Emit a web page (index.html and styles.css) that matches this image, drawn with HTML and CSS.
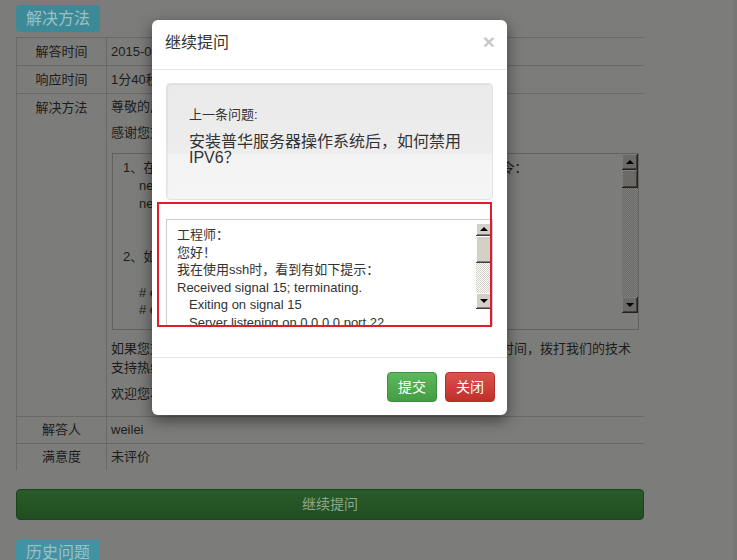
FILE: index.html
```html
<!DOCTYPE html>
<html lang="zh-CN">
<head>
<meta charset="utf-8">
<title>继续提问</title>
<link rel="stylesheet" href="styles.css">
</head>
<body>
<div class="page">
  <div class="badge">解决方法</div>
  <table class="info">
    <tr class="r-short">
      <td class="k">解答时间</td>
      <td class="v">2015-09-23 10:25:18</td>
    </tr>
    <tr class="r-short">
      <td class="k">响应时间</td>
      <td class="v">1分40秒</td>
    </tr>
    <tr>
      <td class="k">解决方法</td>
      <td class="v v-long">
        <p class="ln ln-first">尊敬的用户，您好！</p>
        <p class="ln ln-second">感谢您对普华的支持！</p>
        <div class="bta">
          <div class="bta-text"><div>1、在/etc/sysctl.conf配置文件中添加如下内容，保存后再执行该命令：</div><div class="ind">net.ipv6.conf.all.disable_ipv6 = 1</div><div class="ind">net.ipv6.conf.default.disable_ipv6 = 1</div><div>&nbsp;</div><div>&nbsp;</div><div>2、如果需要临时禁用IPV6，可执行以下命令：</div><div>&nbsp;</div><div class="ind"># echo 1 &gt; /proc/sys/net/ipv6/conf/all/disable_ipv6</div><div class="ind"># echo 1 &gt; /proc/sys/net/ipv6/conf/default/disable_ipv6</div></div>
          <div class="bsb">
            <div class="bsb-btn bsb-up"></div>
            <div class="bsb-thumb"></div>
            <div class="bsb-track"></div>
            <div class="bsb-btn bsb-down"></div>
            <div class="bsb-grip"></div>
          </div>
        </div>
        <p class="ln-para">如果您对以上解决方法有疑问，或在使用中遇到其他问题，请在工作时间，拨打我们的技术支持热线：400-089-1870。</p>
        <p class="ln ln-last">欢迎您再次使用普华技术支持服务！</p>
      </td>
    </tr>
    <tr class="r-foot">
      <td class="k">解答人</td>
      <td class="v">weilei</td>
    </tr>
    <tr class="r-foot">
      <td class="k">满意度</td>
      <td class="v">未评价</td>
    </tr>
  </table>
  <div class="btn-continue">继续提问</div>
  <div class="badge badge-history">历史问题</div>
</div>

<div class="modal">
  <div class="modal-header">
    <span class="modal-title">继续提问</span>
    <span class="modal-close">×</span>
  </div>
  <div class="modal-body">
    <div class="well">
      <div class="well-label">上一条问题:</div>
      <div class="well-q">安装普华服务器操作系统后，如何禁用IPV6？</div>
    </div>
    <div class="ta">
      <div class="ta-text"><div>工程师：</div><div>您好！</div><div>我在使用ssh时，看到有如下提示：</div><div>Received signal 15; terminating.</div><div class="ind2">Exiting on signal 15</div><div class="ind2">Server listening on 0.0.0.0 port 22.</div></div>
      <div class="sb">
        <div class="sb-btn sb-up"></div>
        <div class="sb-thumb"></div>
        <div class="sb-track"></div>
        <div class="sb-btn sb-down"></div>
        <div class="sb-grip"></div>
      </div>
    </div>
    <div class="mark"></div>
  </div>
  <div class="modal-footer">
    <span class="btn btn-ok">提交</span>
    <span class="btn btn-close">关闭</span>
  </div>
</div>
</body>
</html>
```

FILE: styles.css
```css
html, body {
  margin: 0;
  padding: 0;
}
body {
  width: 737px;
  height: 560px;
  overflow: hidden;
  background: #7c7d7a;
  box-shadow: inset -3px 0 0 #767774, inset -5px 0 0 #7a7b78;
  font-family: "Liberation Sans", "Noto Sans CJK SC", sans-serif;
  font-size: 13px;
  color: #1c1c1c;
  position: relative;
}

/* ---------- background page (dimmed) ---------- */
.page {
  padding: 5px 0 0 16px;
  width: 628px;
}
.badge {
  width: 84px;
  height: 27px;
  border-radius: 4px;
  background: #3c8a98;
  color: #9dc0c5;
  font-size: 16px;
  line-height: 27px;
  text-align: center;
}
.badge-history {
  margin-top: 19px;
  background: #4192a2;
}
.info {
  border-collapse: collapse;
  width: 628px;
  margin-top: 5px;
  table-layout: fixed;
}
.info td {
  border-top: 1px solid #696a67;
  padding: 0;
  vertical-align: top;
}
.info td.k {
  width: 89px;
  border-left: 1px solid #696a67;
  border-right: 1px solid #696a67;
  text-align: center;
  line-height: 27px;
}
.info td.v {
  padding-left: 4px;
  line-height: 27px;
}
.info .r-foot td {
  line-height: 26px;
}
.info td.v-long {
  line-height: 20px;
  padding: 3px 8px 12px 4px;
}
.ln {
  margin: 0;
  line-height: 20px;
  white-space: nowrap;
}
.ln-second {
  margin-top: 6px;
}
.ln-last {
  margin-top: 7px;
}
.ln-para {
  margin: 9px 0 0;
  line-height: 19px;
}
.bta {
  margin: 10px 0 0 1px;
  width: 527px;
  height: 177px;
  box-sizing: border-box;
  border: 1px solid #62635f;
  display: flex;
}
.bta-text {
  flex: 1;
  overflow: hidden;
  padding: 5px 0 0 10px;
  line-height: 17.8px;
  white-space: nowrap;
}
.ind {
  padding-left: 16px;
}
.bsb {
  width: 16px;
  display: flex;
  flex-direction: column;
}
.bsb-btn, .bsb-thumb {
  background: #6b6a66;
  box-shadow: inset -1px -1px #222, inset 1px 1px #7d7d7b, inset -2px -2px #404040;
  position: relative;
}
.bsb-up, .bsb-down {
  height: 16px;
}
.bsb-thumb {
  height: 18px;
}
.bsb-track {
  flex: 1;
  background: repeating-conic-gradient(#6a6865 0 25%, #7f7f7d 0 50%) 0 0 / 2px 2px;
}
.bsb-grip {
  height: 16px;
}
.bsb-up::after, .bsb-down::after {
  content: "";
  position: absolute;
  left: 4px;
  top: 6px;
  border-left: 4px solid transparent;
  border-right: 4px solid transparent;
}
.bsb-up::after {
  border-bottom: 4px solid #000;
}
.bsb-down::after {
  border-top: 4px solid #000;
}
.btn-continue {
  margin-top: 19px;
  height: 31px;
  box-sizing: border-box;
  border: 1px solid #1c441c;
  border-radius: 4px;
  background: linear-gradient(#2a5c2a, #204d20);
  color: #8fa78f;
  font-size: 14px;
  line-height: 29px;
  text-align: center;
}

/* ---------- modal ---------- */
.modal {
  position: absolute;
  left: 152px;
  top: 20px;
  width: 355px;
  background: #fff;
  border-radius: 6px;
  box-shadow: 0 5px 15px rgba(0, 0, 0, 0.5);
  color: #333;
}
.modal-header {
  height: 50px;
  box-sizing: border-box;
  padding: 13px 12px 0 13px;
  border-bottom: 1px solid #e5e5e5;
  display: flex;
  justify-content: space-between;
  align-items: flex-start;
}
.modal-title {
  font-size: 16px;
  line-height: 20px;
  color: #333;
}
.modal-close {
  font-size: 21px;
  font-weight: bold;
  line-height: 18px;
  color: #c8c8c8;
}
.modal-body {
  position: relative;
  padding: 13px 14px 31px;
}
.well {
  height: 117px;
  box-sizing: border-box;
  border: 1px solid #e3e3e3;
  border-radius: 4px;
  background: linear-gradient(#ebeaeb 0, #eeedee 60%, #f4f3f4 61%, #f5f5f5 100%);
  box-shadow: inset 1px 1px 1px rgba(0, 0, 0, 0.05);
  padding: 22px 22px 0;
}
.well-label {
  font-size: 13px;
  line-height: 18px;
}
.well-q {
  margin-top: 10px;
  font-size: 16px;
  line-height: 16px;
}
.ta {
  margin-top: 19px;
  height: 107px;
  box-sizing: border-box;
  border: 1px solid #cccccc;
  display: flex;
}
.ta-text {
  flex: 1;
  overflow: hidden;
  padding: 6px 0 0 10px;
  font-size: 13px;
  line-height: 17.6px;
  white-space: nowrap;
  color: #333;
}
.ind2 {
  padding-left: 12px;
}
.sb {
  width: 16px;
  padding-top: 3px;
  display: flex;
  flex-direction: column;
}
.sb-btn, .sb-thumb {
  background: #d4d0c8;
  box-shadow: inset -1px -1px #404040, inset 1px 1px #ffffff, inset -2px -2px #808080;
  position: relative;
}
.sb-up {
  height: 13px;
}
.sb-down {
  height: 16px;
}
.sb-thumb {
  height: 27px;
}
.sb-track {
  flex: 1;
  background: repeating-conic-gradient(#d4d0c8 0 25%, #ffffff 0 50%) 0 0 / 2px 2px;
}
.sb-grip {
  height: 16px;
}
.sb-up::after, .sb-down::after {
  content: "";
  position: absolute;
  left: 4px;
  border-left: 4px solid transparent;
  border-right: 4px solid transparent;
}
.sb-up::after {
  top: 4px;
  border-bottom: 4px solid #000;
}
.sb-down::after {
  top: 6px;
  border-top: 4px solid #000;
}
.mark {
  position: absolute;
  left: 5px;
  top: 132px;
  width: 335px;
  height: 125px;
  box-sizing: border-box;
  border: 2px solid #e31b2a;
}
.modal-footer {
  border-top: 1px solid #e5e5e5;
  padding: 14px 12px 13px;
  display: flex;
  justify-content: flex-end;
  gap: 8px;
}
.btn {
  width: 50px;
  height: 30px;
  box-sizing: border-box;
  border-radius: 4px;
  color: #fff;
  font-size: 14px;
  line-height: 28px;
  text-align: center;
}
.btn-ok {
  background: linear-gradient(#5cb85c, #449d44);
  border: 1px solid #3e8f3e;
}
.btn-close {
  background: linear-gradient(#d9534f, #c12e2a);
  border: 1px solid #b92c28;
}
```
